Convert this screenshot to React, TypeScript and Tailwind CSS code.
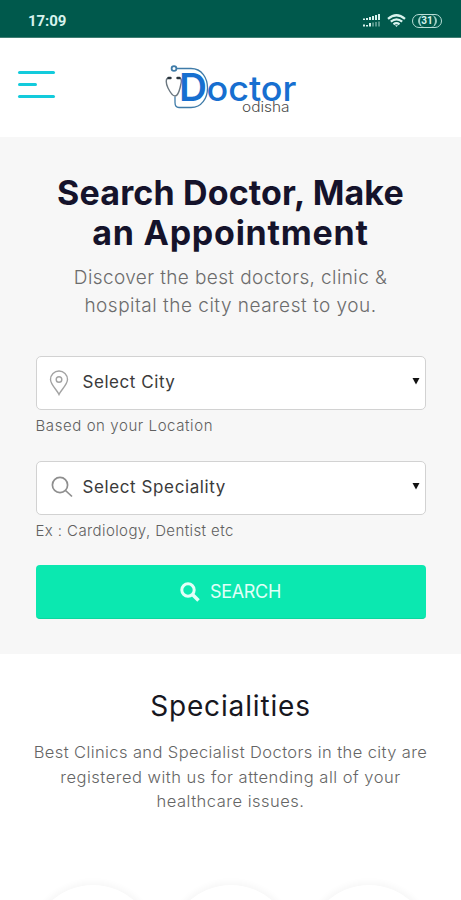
import type { ReactNode } from "react";

const StatusBar = () => (
  <div className="flex h-[38px] items-center justify-between border-b border-[#3f7d72] bg-[#00594c] pt-1 pr-[19px] pl-7 text-[#d8f3ee]">
    <span className="pt-[2px] font-[Roboto] text-[15px] font-bold tracking-[-0.1px]">17:09</span>
    <div className="flex items-center">
      <svg width="19" height="14" viewBox="0 0 19 14" fill="currentColor">
        <path d="M1 4.500h2V6H1zM4 4h2v2H4zM7 3h2v3H7zM10 2h2v4h-2zM13 1h2v5h-2zM16 0h2v6h-2z" />
        <path d="M1 10.500h2v2H1zM4 11h2v1.500H4zM7 9h2v3.500H7z" />
        <path d="M10 8.500h2v4h-2zM13 8h2v4.500h-2zM16 7.500h2v5h-2z" opacity=".4" />
      </svg>
      <svg className="ml-1.5" width="19" height="14" viewBox="0 0 19 14" fill="none" stroke="currentColor" strokeWidth="2.200">
        <path d="M1 4.800Q9.500-2.300 18 4.800M3.800 7.700Q9.500 3 15.200 7.700M6.500 10.300Q9.500 8 12.500 10.300" />
        <path d="M8 11.200h3L9.500 13z" fill="currentColor" stroke="none" />
      </svg>
      <div className="ml-1.5 flex h-[14px] w-[30px] items-center justify-center rounded-full border-[1.5px] border-[#b9ddd6] font-[Roboto] text-[10px] font-bold">
        <span className="flex h-full w-[19px] items-center justify-center rounded-full border-x-2 border-[#9ccdc3]">
          31
        </span>
      </div>
    </div>
  </div>
);

const Logo = () => (
  <svg width="134" height="50" viewBox="0 0 134 50" fill="none">
    <g stroke="#3f7ba8" strokeWidth="1.300">
      <circle cx="10" cy="4.500" r="2.400" strokeWidth="1.800" />
      <path d="M13 4.500h14C49 4.500 49 43.500 27 43.500H15c-3 0-4-2-4-5v-6" />
    </g>
    <path d="M5 14c-4 0-3 6-1 10s4 8 7 8 4-4 5-8 3-10-1-10" stroke="#6b7780" strokeWidth="1.400" />
    <path d="M4.500 14h2M13.500 14h2" stroke="#29343c" strokeWidth="2.400" strokeLinecap="round" />
    <text x="15" y="36.500" fill="#176fd0" fontFamily="Inter, sans-serif" fontSize="38" fontWeight="600" textLength="28" lengthAdjust="spacingAndGlyphs">
      D
    </text>
    <text x="42.500" y="36.500" fill="#176fd0" fontFamily="Inter, sans-serif" fontSize="35" fontWeight="500" textLength="90" lengthAdjust="spacingAndGlyphs">
      octor
    </text>
    <text x="78" y="47.500" fill="#4d4d4d" fontFamily="Inter, sans-serif" fontSize="14" fontWeight="300" textLength="47.500" lengthAdjust="spacingAndGlyphs">
      odisha
    </text>
  </svg>
);

const Header = () => (
  <header className="flex h-[99px] items-start bg-white pl-[18px]">
    <button className="mt-[33px] flex w-[37px] flex-col gap-[9px]" aria-label="Menu">
      <span className="h-[3px] w-full rounded-full bg-[#13cbdc]" />
      <span className="h-[3px] w-[19px] rounded-full bg-[#13cbdc]" />
      <span className="h-[3px] w-full rounded-full bg-[#13cbdc]" />
    </button>
    <div className="mt-[26px] ml-[109px]">
      <Logo />
    </div>
  </header>
);

const PinIcon = () => (
  <svg width="20" height="26" viewBox="0 0 20 26" fill="none" stroke="#a3a3a3" strokeWidth="1.400">
    <path d="M10 24.500C8 20 1.500 14.500 1.500 9.500a8.500 8.500 0 0 1 17 0c0 5-6.500 10.500-8.500 15z" />
    <circle cx="10" cy="9.500" r="2.800" />
  </svg>
);

const LensIcon = () => (
  <svg className="mb-[2px] ml-[2px]" width="22" height="22" viewBox="0 0 22 22" fill="none" stroke="#8e8e8e" strokeWidth="1.700">
    <circle cx="9" cy="9" r="7.600" />
    <path d="M14.500 14.500 21 20.500" />
  </svg>
);

type FieldProps = {
  icon: ReactNode;
  label: ReactNode;
  hint: ReactNode;
};

const Field = ({ icon, label, hint }: FieldProps) => (
  <div>
    <div className="flex h-[54px] items-center rounded-[5px] border border-[#d2d2d2] bg-white pr-[5px] pl-3">
      <span className="flex w-[34px] items-center">{icon}</span>
      <span className="flex-1 text-[17px] whitespace-nowrap text-[#3a3a3a]">{label}</span>
      <svg className="mb-[3px]" width="8" height="7" viewBox="0 0 8 7" fill="#111">
        <path d="M.5 0h7L4 6.500z" />
      </svg>
    </div>
    <p className="mt-[5px] text-[15px] leading-[22px] font-light whitespace-nowrap text-[#606060]">{hint}</p>
  </div>
);

const Hero = () => (
  <section className="h-[517px] bg-[#f7f7f7] px-[35.5px] pt-9">
    <h1 className="flex flex-col items-center text-[34px] leading-[39.5px] font-bold whitespace-nowrap text-[#15132b]">
      <span className="tracking-[0.15px]">Search Doctor, Make</span>
      <span className="tracking-[0.75px]">an Appointment</span>
    </h1>
    <p className="mt-3 flex flex-col items-center text-[19px] leading-7 font-light whitespace-nowrap text-[#6c6c6c]">
      <span className="tracking-[0.39px]">Discover the best doctors, clinic &amp;</span>
      <span className="tracking-[0.5px]">hospital the city nearest to you.</span>
    </p>
    <div className="mt-9 flex flex-col gap-6">
      <Field
        icon={<PinIcon />}
        label={<span className="tracking-[0.55px]">Select City</span>}
        hint={<span className="tracking-[0.58px]">Based on your Location</span>}
      />
      <Field
        icon={<LensIcon />}
        label={<span className="tracking-[0.6px]">Select Speciality</span>}
        hint={<span className="tracking-[0.4px]">Ex : Cardiology, Dentist etc</span>}
      />
    </div>
    <button className="mt-[23px] flex h-[54px] w-full items-center justify-center gap-[10px] rounded-[4px] border-b border-[#0bd79f] bg-[#0be8b0] text-[18px] text-[#e2fff8]">
      <svg width="20" height="20" viewBox="0 0 20 20" fill="none" stroke="currentColor" strokeWidth="3">
        <circle cx="8" cy="8" r="6.200" />
        <path d="m12.500 12.500 6 6" strokeWidth="3.500" />
      </svg>
      <span className="tracking-[-0.3px]">SEARCH</span>
    </button>
  </section>
);

const Specialities = () => (
  <section className="bg-white pt-[33px]">
    <h2 className="text-center text-[28px] leading-[38px] text-[#17171f]">
      <span className="tracking-[0.85px]">Specialities</span>
    </h2>
    <p className="mt-[15px] flex flex-col items-center text-[16.5px] leading-[24.5px] font-light whitespace-nowrap text-[#656565]">
      <span className="tracking-[0.4px]">Best Clinics and Specialist Doctors in the city are</span>
      <span className="tracking-[0.5px]">registered with us for attending all of your</span>
      <span className="tracking-[0.5px]">healthcare issues.</span>
    </p>
    <div className="mt-[71px] flex justify-center gap-3">
      {[0, 1, 2].map((i) => (
        <div key={i} className="size-[126px] rounded-full bg-white shadow-[0_0_6px_3px_#f7f7f7]" />
      ))}
    </div>
  </section>
);

export default function App() {
  return (
    <div className="h-[900px] w-full overflow-hidden bg-white font-[Inter,sans-serif]">
      <StatusBar />
      <Header />
      <Hero />
      <Specialities />
    </div>
  );
}
